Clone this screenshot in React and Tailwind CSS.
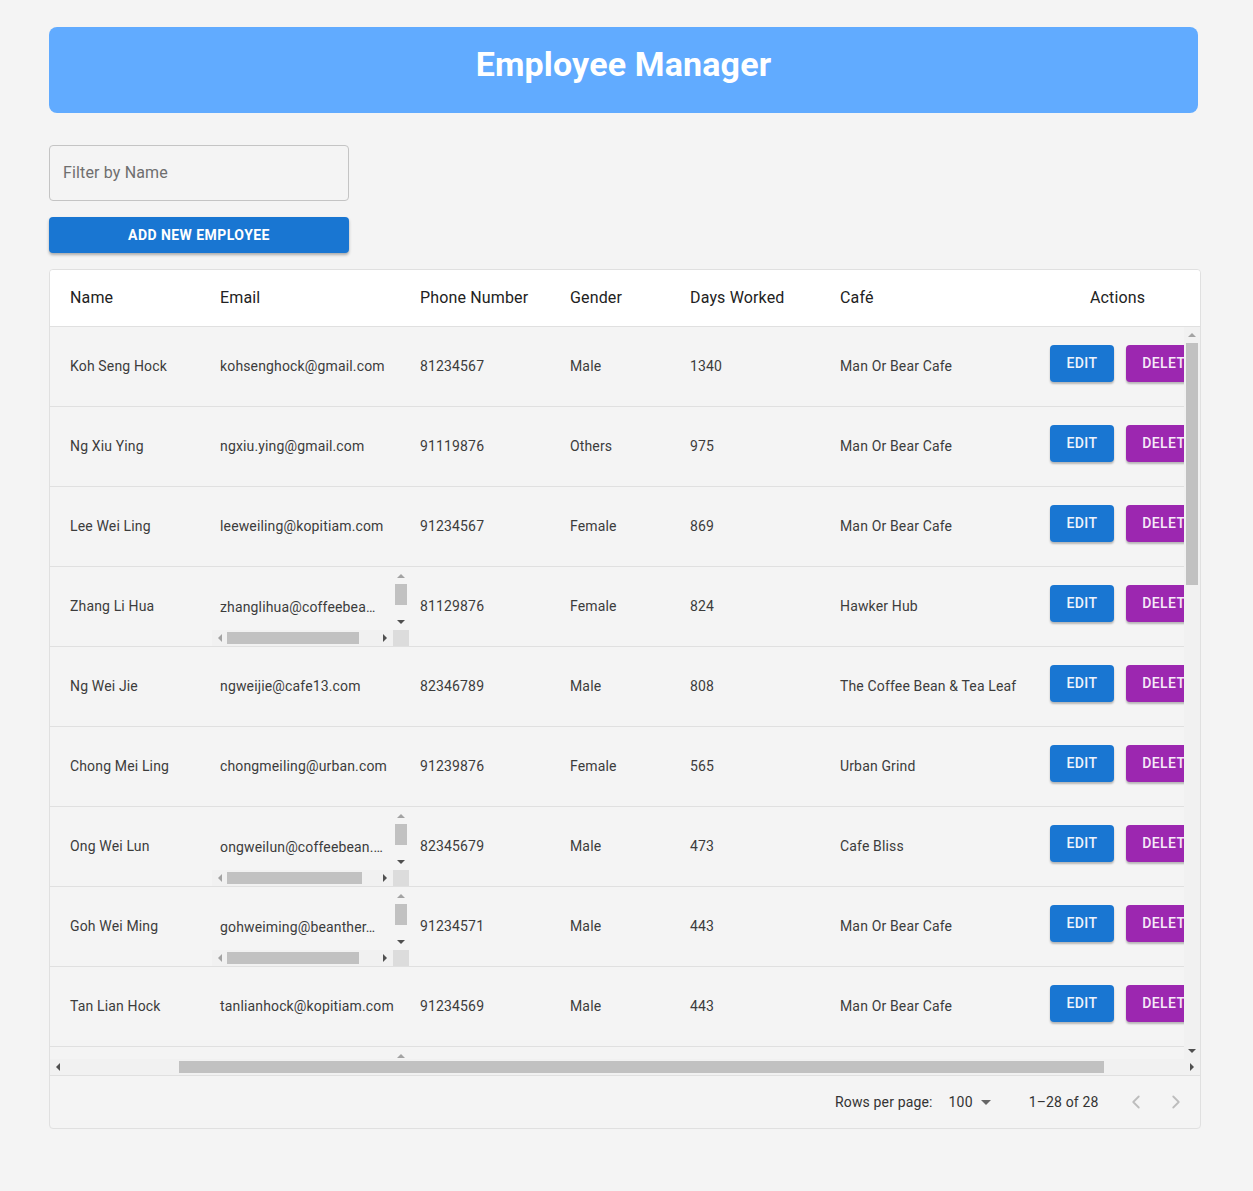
import React from "react";
import { ChevronLeft, ChevronRight } from "lucide-react";

const employees = [
  { name: "Koh Seng Hock", email: "kohsenghock@gmail.com", phone: "81234567", gender: "Male", days: 1340, cafe: "Man Or Bear Cafe" },
  { name: "Ng Xiu Ying", email: "ngxiu.ying@gmail.com", phone: "91119876", gender: "Others", days: 975, cafe: "Man Or Bear Cafe" },
  { name: "Lee Wei Ling", email: "leeweiling@kopitiam.com", phone: "91234567", gender: "Female", days: 869, cafe: "Man Or Bear Cafe" },
  { name: "Zhang Li Hua", email: "zhanglihua@coffeebea…", phone: "81129876", gender: "Female", days: 824, cafe: "Hawker Hub", scroll: 132 },
  { name: "Ng Wei Jie", email: "ngweijie@cafe13.com", phone: "82346789", gender: "Male", days: 808, cafe: "The Coffee Bean & Tea Leaf" },
  { name: "Chong Mei Ling", email: "chongmeiling@urban.com", phone: "91239876", gender: "Female", days: 565, cafe: "Urban Grind" },
  { name: "Ong Wei Lun", email: "ongweilun@coffeebean.…", phone: "82345679", gender: "Male", days: 473, cafe: "Cafe Bliss", scroll: 135 },
  { name: "Goh Wei Ming", email: "gohweiming@beanther…", phone: "91234571", gender: "Male", days: 443, cafe: "Man Or Bear Cafe", scroll: 132 },
  { name: "Tan Lian Hock", email: "tanlianhock@kopitiam.com", phone: "91234569", gender: "Male", days: 443, cafe: "Man Or Bear Cafe" },
  { name: "Lim Ah Kow", email: "limahkow@coffeebean.com", phone: "91234570", gender: "Male", days: 400, cafe: "Cafe Bliss", scroll: 132 },
];

// small scrollbar arrows
const Up = ({ dark }) => (
  <div className={`w-0 h-0 border-x-[4px] border-x-transparent border-b-[4px] ${dark ? "border-b-[#505050]" : "border-b-[#a3a3a3]"}`} />
);
const Down = ({ dark }) => (
  <div className={`w-0 h-0 border-x-[4px] border-x-transparent border-t-[4px] ${dark ? "border-t-[#505050]" : "border-t-[#a3a3a3]"}`} />
);
const Left = ({ dark }) => (
  <div className={`w-0 h-0 border-y-[4px] border-y-transparent border-r-[4px] ${dark ? "border-r-[#505050]" : "border-r-[#a3a3a3]"}`} />
);
const Right = ({ dark }) => (
  <div className={`w-0 h-0 border-y-[4px] border-y-transparent border-l-[4px] ${dark ? "border-l-[#505050]" : "border-l-[#a3a3a3]"}`} />
);

function ScrollCell({ text, thumb }) {
  return (
    <div className="absolute left-[12px] top-[1px] bottom-0 w-[197px] flex flex-col">
      <div className="flex flex-1 min-h-0">
        <div className="flex-1 flex items-center pl-[8px] pt-[16px] whitespace-nowrap overflow-hidden">{text}</div>
        <div className="w-[16px] flex flex-col items-center">
          <div className="h-[16px] flex items-center justify-center">
            <Up />
          </div>
          <div className="w-[12px] h-[21px] bg-[#c1c1c1]" />
          <div className="flex-1" />
          <div className="h-[16px] flex items-center justify-center">
            <Down dark />
          </div>
        </div>
      </div>
      <div className="h-[16px] flex">
        <div className="flex-1 bg-[#f1f1f1] flex items-center">
          <div className="w-[15px] flex justify-center">
            <Left />
          </div>
          <div className="h-[12px] bg-[#c1c1c1]" style={{ width: thumb }} />
          <div className="flex-1" />
          <div className="w-[16px] flex justify-center">
            <Right dark />
          </div>
        </div>
        <div className="w-[16px] bg-[#dcdcdc]" />
      </div>
    </div>
  );
}

function Row({ e }) {
  return (
    <div className="h-[80px] border-b border-[#e0e0e0] flex items-center text-[14px] tracking-[0.15px] text-[#3c3c3c] w-[1160px] shrink-0">
      <div className="w-[150px] shrink-0 pl-[20px]">{e.name}</div>
      <div className="w-[200px] shrink-0 h-full relative flex items-center">
        {e.scroll ? <ScrollCell text={e.email} thumb={e.scroll} /> : <span className="pl-[20px]">{e.email}</span>}
      </div>
      <div className="w-[150px] shrink-0 pl-[20px]">{e.phone}</div>
      <div className="w-[120px] shrink-0 pl-[20px]">{e.gender}</div>
      <div className="w-[150px] shrink-0 pl-[20px]">{e.days}</div>
      <div className="w-[210px] shrink-0 pl-[20px]">{e.cafe}</div>
      <div className="h-full shrink-0 pl-[20px] pt-[18px] flex items-start gap-[12px]">
        <button className="w-[64px] h-[37px] rounded bg-[#1976d2] text-[#eef3fb] text-[14px] tracking-[0.4px] font-medium shadow-[0_2px_2px_rgba(0,0,0,0.25)]">
          EDIT
        </button>
        <button className="w-[84px] h-[37px] rounded bg-[#9c27b0] text-[#f6eaf8] text-[14px] tracking-[0.4px] font-medium shadow-[0_2px_2px_rgba(0,0,0,0.25)]">
          DELETE
        </button>
      </div>
    </div>
  );
}

export default function App() {
  return (
    <div className="min-h-screen bg-[#f4f4f4] pt-[27px] pl-[49px] pb-[60px] font-['Roboto',sans-serif]">
      <div className="w-[1149px] h-[86px] rounded-lg bg-[#61abff] flex justify-center pt-[17px]">
        <h1 className="text-white text-[34px] leading-[40px] tracking-[0.15px] font-bold">Employee Manager</h1>
      </div>

      <input
        placeholder="Filter by Name"
        className="mt-[32px] block w-[300px] h-[56px] border border-[#c4c4c4] rounded px-[13px] pb-[1px] text-[16px] tracking-[0.15px] bg-transparent placeholder:text-[#6e6e6e] outline-none"
      />

      <button className="mt-[16px] block w-[300px] h-[36px] rounded bg-[#1976d2] text-white text-[14px] tracking-[0.45px] font-bold shadow-[0_2px_3px_rgba(0,0,0,0.3)]">
        ADD NEW EMPLOYEE
      </button>

      <div className="mt-[16px] w-[1152px] border border-[#e0e0e0] rounded bg-[#f4f4f4] overflow-hidden">
        {/* header */}
        <div className="h-[57px] bg-white border-b border-[#e0e0e0] flex items-center text-[16px] tracking-[0.15px] text-[#222] overflow-hidden">
          <div className="w-[150px] shrink-0 pl-[20px]">Name</div>
          <div className="w-[200px] shrink-0 pl-[20px]">Email</div>
          <div className="w-[150px] shrink-0 pl-[20px]">Phone Number</div>
          <div className="w-[120px] shrink-0 pl-[20px]">Gender</div>
          <div className="w-[150px] shrink-0 pl-[20px]">Days Worked</div>
          <div className="w-[210px] shrink-0 pl-[20px]">Café</div>
          <div className="w-[175px] shrink-0 text-center">Actions</div>
        </div>

        {/* body */}
        <div className="h-[732px] flex">
          <div className="flex-1 overflow-hidden flex flex-col">
            {employees.map((e) => (
              <Row key={e.name} e={e} />
            ))}
          </div>
          <div className="w-[16px] bg-[#f1f1f1] flex flex-col items-center">
            <div className="h-[16px] flex items-center justify-center">
              <Up />
            </div>
            <div className="w-[12px] h-[242px] bg-[#c1c1c1]" />
            <div className="flex-1" />
            <div className="h-[16px] flex items-center justify-center">
              <Down dark />
            </div>
          </div>
        </div>

        {/* horizontal scrollbar */}
        <div className="h-[17px] bg-[#f1f1f1] flex items-center border-b border-[#e0e0e0]">
          <div className="w-[16px] flex justify-center">
            <Left dark />
          </div>
          <div className="ml-[113px] w-[925px] h-[12px] bg-[#c1c1c1]" />
          <div className="flex-1" />
          <div className="w-[16px] flex justify-center">
            <Right dark />
          </div>
        </div>

        {/* footer */}
        <div className="h-[52px] flex items-center text-[14px] tracking-[0.15px] text-[#333]">
          <div className="ml-[785px]">Rows per page:</div>
          <div className="ml-[16px] flex items-center">
            <span>100</span>
            <div className="ml-[8px] w-0 h-0 border-x-[5px] border-x-transparent border-t-[5px] border-t-[#666]" />
          </div>
          <div className="ml-[38px]">1–28 of 28</div>
          <ChevronLeft className="ml-[27px] w-[22px] h-[22px] text-[#bdbdbd]" strokeWidth={2} />
          <ChevronRight className="ml-[18px] w-[22px] h-[22px] text-[#bdbdbd]" strokeWidth={2} />
        </div>
      </div>
    </div>
  );
}
